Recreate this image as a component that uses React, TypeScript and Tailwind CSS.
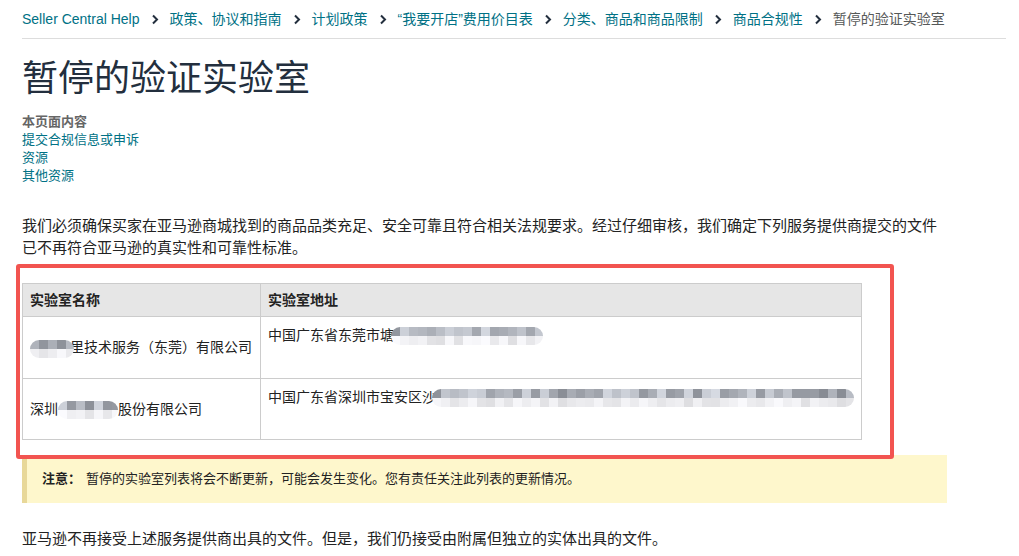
import React from 'react'

const FONT = '"Liberation Sans", "Noto Sans CJK SC", sans-serif'

const crumbs = [
  'Seller Central Help',
  '政策、协议和指南',
  '计划政策',
  '“我要开店”费用价目表',
  '分类、商品和商品限制',
  '商品合规性',
]

function Chevron() {
  return (
    <svg width="8" height="11" viewBox="0 0 8 11" className="mx-[11px] shrink-0">
      <path d="M2 1.5 L6 5.5 L2 9.5" fill="none" stroke="#232f3e" strokeWidth="2" />
    </svg>
  )
}

// pixelated redaction block, two rows of grey squares
function Mosaic({ width, seed }: { width: number; seed: number }) {
  const cells = Math.ceil(width / 9)
  let s = seed
  const rand = () => {
    s = (s * 9301 + 49297) % 233280
    return s / 233280
  }
  const top: string[] = []
  const bottom: string[] = []
  for (let i = 0; i < cells; i++) {
    const t = Math.round(140 + rand() * 80)
    top.push(`rgb(${t - 4},${t},${t + 8})`)
    const b = Math.round(222 + rand() * 30)
    bottom.push(`rgb(${b},${b},${b + 3})`)
  }
  return (
    <span
      className="inline-flex flex-col overflow-hidden rounded-[9px] align-middle relative z-10"
      style={{ width }}
    >
      <span className="flex h-[9px]">
        {top.map((c, i) => (
          <span key={i} className="w-[9px] h-full shrink-0" style={{ background: c }} />
        ))}
      </span>
      <span className="flex h-[9px]">
        {bottom.map((c, i) => (
          <span key={i} className="w-[9px] h-full shrink-0" style={{ background: c }} />
        ))}
      </span>
    </span>
  )
}

export default function App() {
  return (
    <div className="min-h-screen bg-white text-[#222]" style={{ fontFamily: FONT }}>
      <div className="pl-[22px] pr-[13px]">
        {/* breadcrumb */}
        <div className="flex items-center pt-[9px] pb-[9px] text-[14px] leading-[20px] border-b border-[#dddddd] whitespace-nowrap">
          {crumbs.map(c => (
            <React.Fragment key={c}>
              <a className="text-[#007185]">{c}</a>
              <Chevron />
            </React.Fragment>
          ))}
          <span className="text-[#565959]">暂停的验证实验室</span>
        </div>

        <div className="w-[925px]">
          <h1 className="mt-[18px] text-[36px] leading-[44px] text-[#232f3e] font-normal">暂停的验证实验室</h1>

          <div className="mt-[12px] flex flex-col text-[13px] leading-[18px]">
            <span className="font-bold text-[#666666]">本页面内容</span>
            <a className="text-[#007185]">提交合规信息或申诉</a>
            <a className="text-[#007185]">资源</a>
            <a className="text-[#007185]">其他资源</a>
          </div>

          <p className="mt-[30px] text-[15px] leading-[22px]">
            我们必须确保买家在亚马逊商城找到的商品品类充足、安全可靠且符合相关法规要求。经过仔细审核，我们确定下列服务提供商提交的文件已不再符合亚马逊的真实性和可靠性标准。
          </p>

          <div className="relative mt-[24px]">
            <table className="w-[840px] border-collapse text-[14px] leading-[20px]">
              <thead>
                <tr className="bg-[#e6e6e6] h-[33px]">
                  <th className="w-[239px] border border-[#cccccc] px-[7px] text-left font-bold">实验室名称</th>
                  <th className="border border-[#cccccc] px-[7px] text-left font-bold">实验室地址</th>
                </tr>
              </thead>
              <tbody>
                <tr className="h-[62px]">
                  <td className="border border-[#cccccc] px-[7px] align-middle whitespace-nowrap">
                    <Mosaic width={44} seed={7} />
                    <span className="ml-[-4px]">里技术服务（东莞）有限公司</span>
                  </td>
                  <td className="border border-[#cccccc] px-[7px] pt-[8px] align-top whitespace-nowrap">
                    中国广东省东莞市塘
                    <span className="ml-[-3px]"><Mosaic width={152} seed={23} /></span>
                  </td>
                </tr>
                <tr className="h-[61px]">
                  <td className="border border-[#cccccc] px-[7px] align-middle whitespace-nowrap">
                    深圳
                    <Mosaic width={60} seed={41} />
                    股份有限公司
                  </td>
                  <td className="border border-[#cccccc] px-[7px] pt-[8px] align-top whitespace-nowrap">
                    中国广东省深圳市宝安区沙
                    <span className="ml-[-4px]"><Mosaic width={422} seed={97} /></span>
                  </td>
                </tr>
              </tbody>
            </table>
            {/* red annotation frame */}
            <div className="absolute left-[-6px] top-[-19px] w-[878px] h-[195px] border-[4px] border-[#f25450] rounded-[3px] pointer-events-none" />
          </div>

          <div className="mt-[15px] h-[48px] flex items-center bg-[#fef7cc] border-l-[5px] border-[#e8d899] pl-[15px] text-[13px]">
            <span className="font-bold">注意：</span>
            <span className="ml-[5px]">暂停的实验室列表将会不断更新，可能会发生变化。您有责任关注此列表的更新情况。</span>
          </div>

          <p className="mt-[25px] text-[15px] leading-[22px]">
            亚马逊不再接受上述服务提供商出具的文件。但是，我们仍接受由附属但独立的实体出具的文件。
          </p>
        </div>
      </div>
    </div>
  )
}
